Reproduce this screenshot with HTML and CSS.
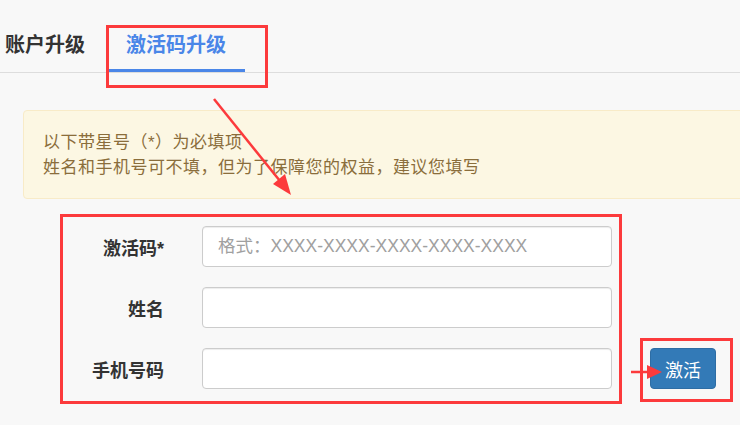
FILE: index.html
```html
<!DOCTYPE html>
<html lang="zh-CN">
<head>
<meta charset="utf-8">
<title>激活码升级</title>
<link rel="stylesheet" href="styles.css">
</head>
<body>
<div class="page">
  <nav class="tabs">
    <a class="tab tab-first">账户升级</a>
    <a class="tab active">激活码升级</a>
  </nav>
  <main class="content">
    <div class="alert">
      <p>以下带星号（*）为必填项</p>
      <p>姓名和手机号可不填，但为了保障您的权益，建议您填写</p>
    </div>
    <form class="form">
      <label class="label">激活码*</label>
      <input class="input" type="text" placeholder="格式：XXXX-XXXX-XXXX-XXXX-XXXX">
      <span></span>
      <label class="label">姓名</label>
      <input class="input" type="text">
      <span></span>
      <label class="label">手机号码</label>
      <input class="input" type="text">
      <button class="btn" type="button">激活</button>
    </form>
  </main>
  <svg class="marks" width="740" height="425" viewBox="0 0 740 425">
    <g fill="none" stroke="#fc3a3c" stroke-width="3">
      <rect x="107.5" y="26.5" width="159" height="60"/>
      <rect x="61.5" y="215.5" width="559" height="187"/>
      <rect x="641.5" y="339.5" width="90" height="61"/>
      <line x1="214" y1="99" x2="280" y2="181" stroke-width="2.5"/>
      <line x1="631" y1="372" x2="650" y2="372" stroke-width="2.5"/>
    </g>
    <g fill="#fc3a3c">
      <polygon points="291,195 273,184 285,174"/>
      <polygon points="662,372 647,365 647,379"/>
    </g>
  </svg>
</div>
</body>
</html>
```

FILE: styles.css
```css
html, body {
  margin: 0;
  padding: 0;
  background: #f8f8f8;
  overflow: hidden;
}

.page {
  position: relative;
  width: 740px;
  height: 425px;
  overflow: hidden;
  font-family: "Liberation Sans", "Noto Sans CJK SC", sans-serif;
  color: #333;
}

.tabs {
  display: flex;
  height: 72px;
  border-bottom: 1px solid #dddddd;
}

.tab {
  display: block;
  padding: 31px 19px 10px 17px;
  line-height: 28px;
  font-size: 20px;
  font-weight: bold;
  color: #333;
  border-bottom: 3px solid transparent;
}

.tab-first {
  padding-left: 5px;
  padding-right: 24px;
}

.tab.active {
  color: #4a86e8;
  border-bottom-color: #4a86e8;
}

.content {
  padding-left: 23px;
}

.alert {
  margin-top: 37px;
  width: 760px;
  box-sizing: border-box;
  padding: 19px 19px 18px;
  background: #fcf7e3;
  border: 1px solid #f8ebc8;
  border-radius: 4px;
  color: #8a6d3b;
  font-size: 17px;
  letter-spacing: 0.5px;
  line-height: 25px;
}

.alert p {
  margin: 0;
}

.form {
  display: grid;
  grid-template-columns: 141px 410px 66px;
  column-gap: 38px;
  row-gap: 20px;
  margin-top: 27px;
  align-items: center;
}

.label {
  text-align: right;
  font-size: 18px;
  font-weight: bold;
  color: #333;
}

.input {
  box-sizing: border-box;
  height: 41px;
  width: 410px;
  padding: 0 15px;
  border: 1px solid #cccccc;
  border-radius: 4px;
  background: #fff;
  font-family: "Liberation Sans", "Noto Sans CJK SC", sans-serif;
  font-size: 17.5px;
  color: #555;
  box-shadow: inset 0 1px 1px rgba(0, 0, 0, 0.075);
}

.input::placeholder {
  color: #a0a0a0;
}

.btn {
  box-sizing: border-box;
  height: 41px;
  width: 66px;
  border: 1px solid #2e6da4;
  border-radius: 4px;
  background: #337ab7;
  color: #fff;
  font-family: "Liberation Sans", "Noto Sans CJK SC", sans-serif;
  font-size: 18px;
  padding: 0;
}

.marks {
  position: absolute;
  left: 0;
  top: 0;
  pointer-events: none;
}
```
